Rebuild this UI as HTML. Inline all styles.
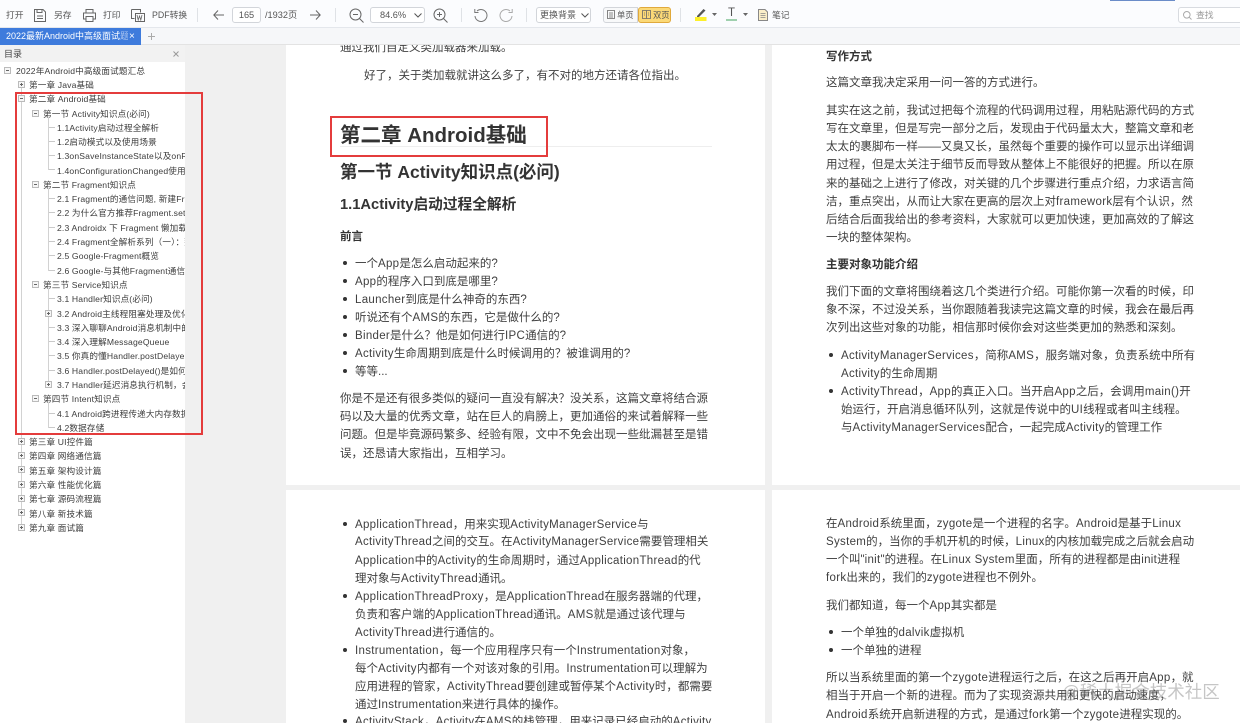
<!DOCTYPE html>
<html lang="zh-CN"><head><meta charset="utf-8"><title>PDF</title>
<style>
html,body{margin:0;padding:0;width:1240px;height:723px;overflow:hidden;background:#f0f0f0;font-family:"Liberation Sans","Noto Sans CJK SC",sans-serif}
body{filter:blur(.3px)}
div,span{box-sizing:border-box}
u{text-decoration:none;letter-spacing:.3px}
#top{position:absolute;left:0;top:0;width:1240px;height:28px;background:#fbfcfe;border-bottom:1px solid #e4e7ec}
#tabs{position:absolute;left:0;top:28px;width:1240px;height:17px;background:#f6f7f9;border-bottom:1px solid #e3e3e3}
#tab{position:absolute;left:0;top:0;width:141px;height:17px;background:#3e7bdc;color:#fff;font-size:9px;line-height:17px;white-space:nowrap;overflow:hidden}
.tb{position:absolute;font-size:8.8px;line-height:14px;color:#555;white-space:nowrap;top:8px}
.sep{position:absolute;top:8px;width:1px;height:14px;background:#dfe2e6}
.box{position:absolute;top:7px;height:16px;border:1px solid #d2d5da;border-radius:3px;background:#fff;font-size:8.8px;line-height:14px;color:#555;white-space:nowrap}
svg{position:absolute;overflow:visible}
#side{position:absolute;left:0;top:45px;width:185px;height:678px;background:#fff;overflow:hidden}
#sh{position:absolute;left:0;top:0;width:185px;height:17px;background:#f2f2f2;font-size:9px;line-height:18px;padding-left:4px;color:#444}
.n{position:absolute;font-size:8.6px;letter-spacing:.15px;line-height:14px;color:#3c3c3c;white-space:nowrap;margin-top:1px}
.v{position:absolute;width:1px;background:#d2d2d2}
.h{position:absolute;height:1px;background:#c9c9c9}
.b{position:absolute;width:7px;height:7px;border:1px solid #bbb;background:#f6f6f6}
.b:before{content:"";position:absolute;left:1px;top:2px;width:3px;height:1px;background:#666}
.p:after{content:"";position:absolute;left:2px;top:1px;width:1px;height:3px;background:#666}
.pg{position:absolute;background:#fff;overflow:hidden}
.l{position:absolute;font-size:11.5px;line-height:18px;color:#3f3f3f;white-space:nowrap;margin-top:1px}
.d{position:absolute;width:4px;height:4px;border-radius:50%;background:#333}
.bd{font-weight:bold;color:#333}
#red1{position:absolute;left:15px;top:92px;width:188px;height:343px;border:2px solid #e43c3c}
#red2{position:absolute;left:330px;top:116px;width:218px;height:41px;border:2px solid #e43c3c}
#wm{position:absolute;left:1062px;top:680px;font-size:17.5px;line-height:24px;color:rgba(120,120,120,.42);white-space:nowrap}
</style></head><body>

<div id="top"></div>
<div style="position:absolute;left:1110px;top:0;width:65px;height:1px;background:#6a8cc8"></div>
<div class="tb" style="left:6px">打开</div>
<svg style="left:34px;top:9px" width="12" height="13" viewBox="0 0 12 13" fill="none" stroke="#666"><path d="M.5.5h8.500l2.500 2.500v9.500h-11zM3 .5v3h5v-3M3 7h6M3 9.500h6"/></svg>
<div class="tb" style="left:54px">另存</div>
<svg style="left:83px;top:9px" width="13" height="13" viewBox="0 0 13 13" fill="none" stroke="#666"><path d="M3 4V.5h7V4M3 10H.5V4h12v6H10M3 7.500h7v5H3z"/></svg>
<div class="tb" style="left:103px">打印</div>
<svg style="left:131px;top:9px" width="14" height="13" viewBox="0 0 14 13" fill="none" stroke="#666"><path d="M.5.500h9v3M.5.500v9h3M4.500 4.500h9v8h-9z"/><path d="M6 6l1.200 5 1.300-4 1.300 4L11 6" stroke-width=".8"/></svg>
<div class="tb" style="left:152px">PDF转换</div>
<div class="sep" style="left:197px"></div>
<svg style="left:213px;top:10px" width="11" height="10" viewBox="0 0 11 10" fill="none" stroke="#666"><path d="M11 5H.8M5 .5L.8 5 5 9.500"/></svg>
<div class="box" style="left:232px;width:29px;text-align:center;font-size:9.2px">165</div>
<div class="tb" style="left:265px;font-size:9.2px">/1932页</div>
<svg style="left:310px;top:10px" width="11" height="10" viewBox="0 0 11 10" fill="none" stroke="#666"><path d="M0 5h10.200M6 .5L10.200 5 6 9.500"/></svg>
<div class="sep" style="left:335px"></div>
<svg style="left:349px;top:8px" width="15" height="15" viewBox="0 0 15 15" fill="none" stroke="#666"><circle cx="6.500" cy="6.500" r="5.500"/><path d="M4 6.500h5M10.500 10.500l4 4"/></svg>
<div class="box" style="left:370px;width:55px;padding-left:9px;font-size:9.2px">84.6%<svg style="left:43px;top:5px" width="8" height="5" viewBox="0 0 8 5" fill="none" stroke="#555"><path d="M.5.500L4 4 7.500.5"/></svg></div>
<svg style="left:433px;top:8px" width="15" height="15" viewBox="0 0 15 15" fill="none" stroke="#666"><circle cx="6.500" cy="6.500" r="5.500"/><path d="M4 6.500h5M6.500 4v5M10.500 10.500l4 4"/></svg>
<div class="sep" style="left:461px"></div>
<svg style="left:474px;top:8px" width="14" height="14" viewBox="0 0 14 14" fill="none" stroke="#777"><path d="M3 3a6 6 0 1 1-2 5M.8 1v3.500h3.700"/></svg>
<svg style="left:499px;top:8px" width="14" height="14" viewBox="0 0 14 14" fill="none" stroke="#aaa"><path d="M11 3a6 6 0 1 0 2 5M13.200 1v3.500H9.500"/></svg>
<div class="sep" style="left:526px"></div>
<div class="box" style="left:536px;width:55px;padding-left:3px;font-size:9px">更换背景<svg style="left:44px;top:5px" width="8" height="5" viewBox="0 0 8 5" fill="none" stroke="#555"><path d="M.5.500L4 4 7.500.5"/></svg></div>
<div class="box" style="left:603px;width:35px;border-radius:3px 0 0 3px;padding-left:13px;background:#f8f9fa;font-size:8.300px">单页<svg style="left:3px;top:2px" width="8" height="9" viewBox="0 0 8 9" fill="none" stroke="#666"><path d="M.5.500h7v8h-7zM2 3h4M2 5h4M2 7h4" stroke-width=".8"/></svg></div>
<div class="box" style="left:638px;width:33px;border-color:#e0a93c;background:#fbd977;padding-left:14px;font-size:8.300px">双页<svg style="left:3px;top:2px" width="9" height="9" viewBox="0 0 9 9" fill="none" stroke="#666"><path d="M.5.500h8v8h-8zM4.500.5v8M2 3h1M2 5h1M6 3h1M6 5h1" stroke-width=".8"/></svg></div>
<div class="sep" style="left:680px"></div>
<svg style="left:695px;top:9px" width="12" height="13" viewBox="0 0 12 13"><path d="M2 7L8.500 0l2 1.500L4 8H2z" fill="#555"/><rect x="0" y="8" width="11.500" height="4" fill="#fdf02a"/></svg>
<svg style="left:712px;top:13px" width="5" height="3" viewBox="0 0 5 3"><path d="M0 0h5L2.500 3z" fill="#666"/></svg>
<div style="position:absolute;left:726px;top:7px;width:11px;text-align:center;font-size:11.500px;line-height:13px;color:#555">T</div>
<div style="position:absolute;left:726px;top:19px;width:11px;height:2px;background:#9fd0ae"></div>
<svg style="left:743px;top:13px" width="5" height="3" viewBox="0 0 5 3"><path d="M0 0h5L2.500 3z" fill="#666"/></svg>
<svg style="left:758px;top:9px" width="10" height="12" viewBox="0 0 10 12"><path d="M.5.500h6.500l2.500 2.500v8.500h-9z" fill="#fbefc9" stroke="#888"/><path d="M2.500 4.500h5M2.500 6.500h5M2.500 8.500h5" stroke="#888" stroke-width=".7"/></svg>
<div class="tb" style="left:772px">笔记</div>
<div class="box" style="left:1178px;top:7px;width:70px;height:16px;padding-left:17px;color:#999;border-color:#d8dbe0">查找<svg style="left:4px;top:3px" width="9" height="9" viewBox="0 0 9 9" fill="none" stroke="#aaa"><circle cx="3.800" cy="3.800" r="3.300"/><path d="M6.200 6.200L8.500 8.500"/></svg></div>

<div id="tabs"><div id="tab"><span style="position:absolute;left:6px;top:0;width:122px;overflow:hidden;display:block">2022最新Android中高级面试<span style="opacity:.55">题</span></span><span style="position:absolute;left:129px;top:0;font-size:10px">×</span></div>
<svg style="left:148px;top:5px" width="7" height="7" viewBox="0 0 7 7" stroke="#aaa"><path d="M3.500 0v7M0 3.500h7"/></svg></div>

<div id="side">
<div id="sh">目录<svg style="left:173px;top:6px" width="6" height="6" viewBox="0 0 6 6" stroke="#999"><path d="M.5.500l5 5M5.500.5l-5 5"/></svg></div>
<div class="v" style="left:21px;top:40px;height:442px"></div>
<div class="v" style="left:48px;top:73px;height:52px"></div>
<div class="v" style="left:48px;top:144px;height:82px"></div>
<div class="v" style="left:48px;top:244px;height:96px"></div>
<div class="v" style="left:48px;top:358px;height:25px"></div>
<div class="h" style="left:49px;top:82px;width:6px"></div><div class="h" style="left:49px;top:96px;width:6px"></div><div class="h" style="left:49px;top:110px;width:6px"></div><div class="h" style="left:49px;top:124px;width:6px"></div>
<div class="h" style="left:49px;top:153px;width:6px"></div><div class="h" style="left:49px;top:167px;width:6px"></div><div class="h" style="left:49px;top:182px;width:6px"></div><div class="h" style="left:49px;top:196px;width:6px"></div><div class="h" style="left:49px;top:210px;width:6px"></div><div class="h" style="left:49px;top:225px;width:6px"></div>
<div class="h" style="left:49px;top:253px;width:6px"></div><div class="h" style="left:49px;top:282px;width:6px"></div><div class="h" style="left:49px;top:296px;width:6px"></div><div class="h" style="left:49px;top:310px;width:6px"></div><div class="h" style="left:49px;top:325px;width:6px"></div><div class="h" style="left:49px;top:368px;width:6px"></div><div class="h" style="left:49px;top:382px;width:6px"></div>

<div class="b" style="left:4px;top:22px"></div><div class="n" style="left:16px;top:18px">2022年Android中高级面试题汇总</div>
<div class="b p" style="left:18px;top:36px"></div><div class="n" style="left:29px;top:32px">第一章 Java基础</div>
<div class="b" style="left:18px;top:50px"></div><div class="n" style="left:29px;top:46px">第二章 Android基础</div>
<div class="b" style="left:32px;top:65px"></div><div class="n" style="left:43px;top:61px">第一节 Activity知识点(必问)</div>
<div class="n" style="left:57px;top:75px">1.1Activity启动过程全解析</div>
<div class="n" style="left:57px;top:89px">1.2启动模式以及使用场景</div>
<div class="n" style="left:57px;top:103px">1.3onSaveInstanceState以及onResume</div>
<div class="n" style="left:57px;top:118px">1.4onConfigurationChanged使用场景</div>
<div class="b" style="left:32px;top:136px"></div><div class="n" style="left:43px;top:132px">第二节 Fragment知识点</div>
<div class="n" style="left:57px;top:146px">2.1 Fragment的通信问题, 新建Fragment</div>
<div class="n" style="left:57px;top:160px">2.2 为什么官方推荐Fragment.setArgs</div>
<div class="n" style="left:57px;top:175px">2.3 Androidx 下 Fragment 懒加载的方式</div>
<div class="n" style="left:57px;top:189px">2.4 Fragment全解析系列（一）：那些</div>
<div class="n" style="left:57px;top:203px">2.5 Google-Fragment概览</div>
<div class="n" style="left:57px;top:218px">2.6 Google-与其他Fragment通信方式</div>
<div class="b" style="left:32px;top:236px"></div><div class="n" style="left:43px;top:232px">第三节 Service知识点</div>
<div class="n" style="left:57px;top:246px">3.1 Handler知识点(必问)</div>
<div class="b p" style="left:45px;top:265px"></div><div class="n" style="left:57px;top:261px">3.2 Android主线程阻塞处理及优化经验</div>
<div class="n" style="left:57px;top:275px">3.3 深入聊聊Android消息机制中的消息</div>
<div class="n" style="left:57px;top:289px">3.4 深入理解MessageQueue</div>
<div class="n" style="left:57px;top:303px">3.5 你真的懂Handler.postDelayed()吗</div>
<div class="n" style="left:57px;top:318px">3.6 Handler.postDelayed()是如何精确</div>
<div class="b p" style="left:45px;top:336px"></div><div class="n" style="left:57px;top:332px">3.7 Handler延迟消息执行机制，会阻塞吗</div>
<div class="b" style="left:32px;top:350px"></div><div class="n" style="left:43px;top:346px">第四节 Intent知识点</div>
<div class="n" style="left:57px;top:361px">4.1 Android跨进程传递大内存数据的方式</div>
<div class="n" style="left:57px;top:375px">4.2数据存储</div>
<div class="b p" style="left:18px;top:393px"></div><div class="n" style="left:29px;top:389px">第三章 UI控件篇</div>
<div class="b p" style="left:18px;top:407px"></div><div class="n" style="left:29px;top:403px">第四章 网络通信篇</div>
<div class="b p" style="left:18px;top:421px"></div><div class="n" style="left:29px;top:418px">第五章 架构设计篇</div>
<div class="b p" style="left:18px;top:436px"></div><div class="n" style="left:29px;top:432px">第六章 性能优化篇</div>
<div class="b p" style="left:18px;top:450px"></div><div class="n" style="left:29px;top:446px">第七章 源码流程篇</div>
<div class="b p" style="left:18px;top:464px"></div><div class="n" style="left:29px;top:461px">第八章 新技术篇</div>
<div class="b p" style="left:18px;top:479px"></div><div class="n" style="left:29px;top:475px">第九章 面试篇</div>
</div>

<div class="pg" style="left:286px;top:45px;width:479px;height:440px"></div>
<div class="pg" style="left:772px;top:45px;width:468px;height:440px"></div>
<div class="pg" style="left:286px;top:490px;width:479px;height:233px"></div>
<div class="pg" style="left:772px;top:490px;width:468px;height:233px"></div>

<div style="position:absolute;left:286px;top:45px;width:954px;height:678px;overflow:hidden">
<div style="position:absolute;left:-286px;top:-45px;width:1240px;height:723px">
<div class="l" style="left:340px;top:38px">通过我们自定义类加载器来加载。</div>
<div class="l" style="left:364px;top:66px">好了，关于类加载就讲这么多了，有不对的地方还请各位指出。</div>
<div class="l bd" style="left:340px;top:121px;font-size:20.500px;line-height:28px">第二章 Android基础</div>
<div style="position:absolute;left:340px;top:146px;width:372px;height:1px;background:#eee"></div>
<div class="l bd" style="left:340px;top:159px;font-size:17.500px;line-height:24px">第一节 Activity知识点(必问)</div>
<div class="l bd" style="left:340px;top:194px;font-size:14.700px;line-height:20px">1.1Activity启动过程全解析</div>
<div class="l bd" style="left:340px;top:227px">前言</div>
<div class="d" style="left:343px;top:261px"></div><div class="l" style="left:355px;top:254px">一个<u>App</u>是怎么启动起来的?</div>
<div class="d" style="left:343px;top:279px"></div><div class="l" style="left:355px;top:272px"><u>App</u>的程序入口到底是哪里?</div>
<div class="d" style="left:343px;top:297px"></div><div class="l" style="left:355px;top:290px"><u>Launcher</u>到底是什么神奇的东西?</div>
<div class="d" style="left:343px;top:315px"></div><div class="l" style="left:355px;top:308px">听说还有个<u>AMS</u>的东西，它是做什么的?</div>
<div class="d" style="left:343px;top:333px"></div><div class="l" style="left:355px;top:326px"><u>Binder</u>是什么？他是如何进行<u>IPC</u>通信的?</div>
<div class="d" style="left:343px;top:351px"></div><div class="l" style="left:355px;top:344px"><u>Activity</u>生命周期到底是什么时候调用的？被谁调用的?</div>
<div class="d" style="left:343px;top:369px"></div><div class="l" style="left:355px;top:362px">等等...</div>
<div class="l" style="left:340px;top:389px">你是不是还有很多类似的疑问一直没有解决？没关系，这篇文章将结合源</div>
<div class="l" style="left:340px;top:407px">码以及大量的优秀文章，站在巨人的肩膀上，更加通俗的来试着解释一些</div>
<div class="l" style="left:340px;top:425px">问题。但是毕竟源码繁多、经验有限，文中不免会出现一些纰漏甚至是错</div>
<div class="l" style="left:340px;top:444px">误，还恳请大家指出，互相学习。</div>

<div class="l bd" style="left:826px;top:47px">写作方式</div>
<div class="l" style="left:826px;top:73px">这篇文章我决定采用一问一答的方式进行。</div>
<div class="l" style="left:826px;top:101px">其实在这之前，我试过把每个流程的代码调用过程，用粘贴源代码的方式</div>
<div class="l" style="left:826px;top:119px">写在文章里，但是写完一部分之后，发现由于代码量太大，整篇文章和老</div>
<div class="l" style="left:826px;top:137px">太太的裹脚布一样——又臭又长，虽然每个重要的操作可以显示出详细调</div>
<div class="l" style="left:826px;top:155px">用过程，但是太关注于细节反而导致从整体上不能很好的把握。所以在原</div>
<div class="l" style="left:826px;top:174px">来的基础之上进行了修改，对关键的几个步骤进行重点介绍，力求语言简</div>
<div class="l" style="left:826px;top:192px">洁，重点突出，从而让大家在更高的层次上对<u>framework</u>层有个认识，然</div>
<div class="l" style="left:826px;top:210px">后结合后面我给出的参考资料，大家就可以更加快速，更加高效的了解这</div>
<div class="l" style="left:826px;top:228px">一块的整体架构。</div>
<div class="l bd" style="left:826px;top:255px">主要对象功能介绍</div>
<div class="l" style="left:826px;top:282px">我们下面的文章将围绕着这几个类进行介绍。可能你第一次看的时候，印</div>
<div class="l" style="left:826px;top:300px">象不深，不过没关系，当你跟随着我读完这篇文章的时候，我会在最后再</div>
<div class="l" style="left:826px;top:318px">次列出这些对象的功能，相信那时候你会对这些类更加的熟悉和深刻。</div>
<div class="d" style="left:829px;top:353px"></div><div class="l" style="left:841px;top:346px"><u>ActivityManagerServices</u>，简称<u>AMS</u>，服务端对象，负责系统中所有</div>
<div class="l" style="left:841px;top:364px"><u>Activity</u>的生命周期</div>
<div class="d" style="left:829px;top:389px"></div><div class="l" style="left:841px;top:382px"><u>ActivityThread</u>，<u>App</u>的真正入口。当开启<u>App</u>之后，会调用<u>main()</u>开</div>
<div class="l" style="left:841px;top:400px">始运行，开启消息循环队列，这就是传说中的<u>UI</u>线程或者叫主线程。</div>
<div class="l" style="left:841px;top:418px">与<u>ActivityManagerServices</u>配合，一起完成<u>Activity</u>的管理工作</div>

<div class="d" style="left:343px;top:522px"></div><div class="l" style="left:355px;top:515px"><u>ApplicationThread</u>，用来实现<u>ActivityManagerService</u>与</div>
<div class="l" style="left:355px;top:532px"><u>ActivityThread</u>之间的交互。在<u>ActivityManagerService</u>需要管理相关</div>
<div class="l" style="left:355px;top:551px"><u>Application</u>中的<u>Activity</u>的生命周期时，通过<u>ApplicationThread</u>的代</div>
<div class="l" style="left:355px;top:569px">理对象与<u>ActivityThread</u>通讯。</div>
<div class="d" style="left:343px;top:594px"></div><div class="l" style="left:355px;top:587px"><u>ApplicationThreadProxy</u>，是<u>ApplicationThread</u>在服务器端的代理，</div>
<div class="l" style="left:355px;top:605px">负责和客户端的<u>ApplicationThread</u>通讯。<u>AMS</u>就是通过该代理与</div>
<div class="l" style="left:355px;top:623px"><u>ActivityThread</u>进行通信的。</div>
<div class="d" style="left:343px;top:648px"></div><div class="l" style="left:355px;top:641px"><u>Instrumentation</u>，每一个应用程序只有一个<u>Instrumentation</u>对象，</div>
<div class="l" style="left:355px;top:659px">每个<u>Activity</u>内都有一个对该对象的引用。<u>Instrumentation</u>可以理解为</div>
<div class="l" style="left:355px;top:677px">应用进程的管家，<u>ActivityThread</u>要创建或暂停某个<u>Activity</u>时，都需要</div>
<div class="l" style="left:355px;top:695px">通过<u>Instrumentation</u>来进行具体的操作。</div>
<div class="d" style="left:343px;top:719px"></div><div class="l" style="left:355px;top:712px"><u>ActivityStack</u>，<u>Activity</u>在<u>AMS</u>的栈管理，用来记录已经启动的<u>Activity</u></div>

<div class="l" style="left:826px;top:514px">在<u>Android</u>系统里面，<u>zygote</u>是一个进程的名字。<u>Android</u>是基于<u>Linux</u></div>
<div class="l" style="left:826px;top:532px"><u>System</u>的，当你的手机开机的时候，<u>Linux</u>的内核加载完成之后就会启动</div>
<div class="l" style="left:826px;top:550px">一个叫"<u>init</u>"的进程。在<u>Linux System</u>里面，所有的进程都是由<u>init</u>进程</div>
<div class="l" style="left:826px;top:568px"><u>fork</u>出来的，我们的<u>zygote</u>进程也不例外。</div>
<div class="l" style="left:826px;top:596px">我们都知道，每一个<u>App</u>其实都是</div>
<div class="d" style="left:829px;top:630px"></div><div class="l" style="left:841px;top:623px">一个单独的<u>dalvik</u>虚拟机</div>
<div class="d" style="left:829px;top:648px"></div><div class="l" style="left:841px;top:641px">一个单独的进程</div>
<div class="l" style="left:826px;top:668px">所以当系统里面的第一个<u>zygote</u>进程运行之后，在这之后再开启<u>App</u>，就</div>
<div class="l" style="left:826px;top:686px">相当于开启一个新的进程。而为了实现资源共用和更快的启动速度，</div>
<div class="l" style="left:826px;top:705px"><u>Android</u>系统开启新进程的方式，是通过<u>fork</u>第一个<u>zygote</u>进程实现的。</div>
</div></div>

<div id="red1"></div>
<div id="red2"></div>
<div id="wm">@稀土掘金技术社区</div>
</body></html>
